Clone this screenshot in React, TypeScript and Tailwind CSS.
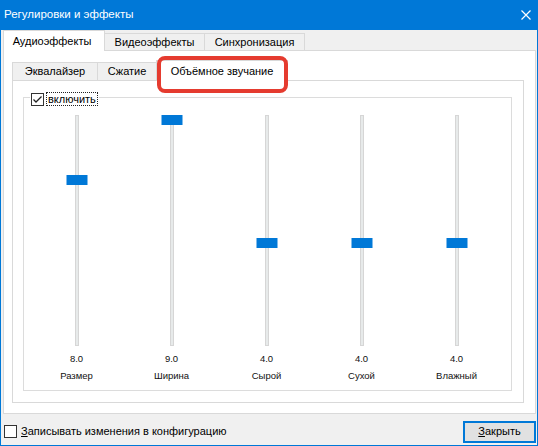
import React from 'react'

const sliders = [
  { value: '8.0', label: 'Размер', top: 'top-[59px]' },
  { value: '9.0', label: 'Ширина', top: 'top-[-1px]' },
  { value: '4.0', label: 'Сырой', top: 'top-[122px]' },
  { value: '4.0', label: 'Сухой', top: 'top-[122px]' },
  { value: '4.0', label: 'Влажный', top: 'top-[122px]' },
]

function CheckBox({ checked }: { checked?: boolean }) {
  return (
    <div className="w-[13px] h-[13px] border border-[#333] bg-white flex items-center justify-center shrink-0">
      {checked && (
        <svg width="11" height="11" viewBox="0 0 11 11" fill="none">
          <path d="M1.5 5.5 L4 8 L9.5 2.5" stroke="#222" strokeWidth="1.3" />
        </svg>
      )}
    </div>
  )
}

export default function App() {
  return (
    <div
      className="w-[538px] h-[446px] bg-[#f0f0f0] flex flex-col text-[11px] text-black overflow-hidden"
      style={{ fontFamily: '"Liberation Sans", Arial, sans-serif' }}
    >
      {/* заголовок окна */}
      <div className="h-[30px] bg-[#0078d7] flex items-center justify-between pl-[4px] pr-[7px] text-white shrink-0">
        <span className="text-[11.5px]">Регулировки и эффекты</span>
        <svg width="10" height="10" viewBox="0 0 10 10">
          <path d="M0.5 0.5 L9.5 9.5 M9.5 0.5 L0.5 9.5" stroke="#fff" strokeWidth="1.2" />
        </svg>
      </div>

      <div className="flex-1 flex flex-col border-x border-b border-[#0078d7] pl-[2px] pr-[1px]">
        {/* внешние вкладки */}
        <div className="h-[20px] flex items-end">
          <div className="relative z-10 w-[102px] h-[21px] -mb-px bg-white border border-b-0 border-[#d9d9d9] flex items-center justify-center pr-[4px]">
            Аудиоэффекты
          </div>
          <div className="w-[101px] h-[17px] -ml-px bg-[#f0f0f0] border border-b-0 border-[#d9d9d9] flex items-center justify-center">
            Видеоэффекты
          </div>
          <div className="w-[101px] h-[17px] -ml-px bg-[#f0f0f0] border border-b-0 border-[#d9d9d9] flex items-center justify-center">
            Синхронизация
          </div>
        </div>

        {/* панель аудиоэффектов */}
        <div className="relative w-[533px] h-[364px] bg-white border border-[#d9d9d9] pl-[8px] pt-[9px]">
          <div className="h-[20px] flex items-end">
            <div className="w-[86px] h-[18px] bg-[#f0f0f0] border border-b-0 border-[#d9d9d9] flex items-center justify-center">
              Эквалайзер
            </div>
            <div className="w-[60px] h-[18px] -ml-px bg-[#f0f0f0] border border-b-0 border-[#d9d9d9] flex items-center justify-center">
              Сжатие
            </div>
            <div className="relative z-10 w-[132px] h-[21px] -ml-px -mb-px bg-white border border-b-0 border-[#d9d9d9] flex items-center justify-center">
              Объёмное звучание
            </div>
          </div>

          <div className="w-[512px] h-[323px] border border-[#d9d9d9] bg-white pl-[10px] pt-[16px]">
            {/* группа с флажком */}
            <div className="relative w-[489px] h-[294px] border border-[#dcdcdc]">
              <div className="absolute left-[6px] top-[-6px] h-[14px] flex items-center bg-white pl-[1px] pr-[1px]">
                <CheckBox checked />
                <div className="ml-[2px] h-[14px] px-[1px] flex items-center border border-dotted border-[#222] leading-none">
                  включить
                </div>
              </div>

              <div className="flex pl-[5px] pt-[17px] text-[9.5px] text-[#111]">
                {sliders.map((s, i) => (
                  <div key={i} className="w-[95px] flex flex-col items-center">
                    <div className="relative w-[4px] h-[231px] bg-[#e7eaea] border border-[#d6d6d6]">
                      <div className={`absolute left-1/2 -translate-x-1/2 w-[21px] h-[10px] bg-[#0078d7] ${s.top}`} />
                    </div>
                    <div className="mt-[7px] leading-[12px]">{s.value}</div>
                    <div className="mt-[5px] leading-[12px]">{s.label}</div>
                  </div>
                ))}
              </div>
            </div>
          </div>

          {/* красная рамка выделения */}
          <div className="absolute left-[153px] top-[5px] w-[131px] h-[37px] border-[4px] border-[#e53b2f] rounded-[8px] z-20" />
        </div>

        {/* нижняя строка */}
        <div className="h-[31px] flex items-center justify-between pt-[4px] pl-[1px]">
          <div className="flex items-center">
            <CheckBox />
            <span className="ml-[4px]">
              <span className="underline">З</span>аписывать изменения в конфигурацию
            </span>
          </div>
          <div className="w-[73px] h-[22px] border-2 border-[#0078d7] bg-[#e1e1e1] flex items-center justify-center">
            <span>
              <span className="underline">З</span>акрыть
            </span>
          </div>
        </div>
      </div>
    </div>
  )
}
